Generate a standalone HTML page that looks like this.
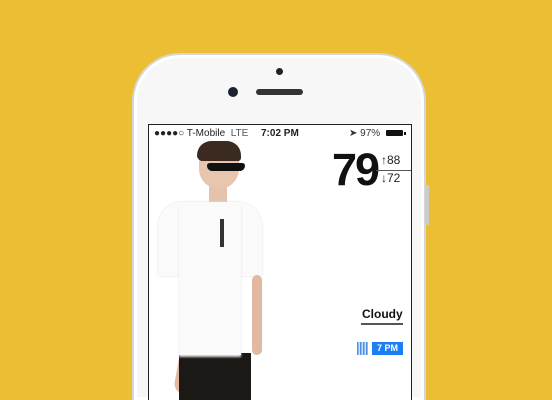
<!DOCTYPE html>
<html style="width:552px;height:400px;overflow:hidden"><head><style>
body{margin:0;width:552px;height:400px;overflow:hidden;background:#ECBE34;position:relative;font-family:"Liberation Sans",sans-serif}
.phone{position:absolute;left:132px;top:53px;width:294px;height:347px;background:#f7f7f7;border-radius:48px 48px 0 0;border:2px solid #d6d6d8;border-bottom:none;box-sizing:border-box;box-shadow:inset 0 0 0 3px #fff}
.screen{position:absolute;left:148px;top:124px;width:264px;height:276px;background:#fff;border:1px solid #222;border-bottom:none;box-sizing:border-box;overflow:hidden}
.abs{position:absolute}
</style></head><body>
<div class="phone"></div>
<div class="abs" style="left:276px;top:68px;width:7px;height:7px;border-radius:50%;background:#222"></div>
<div class="abs" style="left:228px;top:87px;width:10px;height:10px;border-radius:50%;background:#1b2230"></div>
<div class="abs" style="left:256px;top:89px;width:47px;height:6px;border-radius:3px;background:#333"></div>
<div class="abs" style="left:425px;top:185px;width:4px;height:40px;background:#ccc;border-radius:2px"></div>
<div class="screen">
 <div class="abs" style="left:5px;top:3px;font-size:10px;color:#222;white-space:nowrap">●●●●○ T-Mobile &nbsp;<span style="color:#555">LTE</span></div>
 <div class="abs" style="left:112px;top:3px;font-size:10px;font-weight:bold;color:#222">7:02 PM</div>
 <div class="abs" style="left:200px;top:3px;font-size:10px;color:#333">➤ 97%</div>
 <div class="abs" style="left:237px;top:5px;width:17px;height:6px;background:#111;border-radius:1px"></div>
 <div class="abs" style="left:255px;top:7px;width:2px;height:3px;background:#111"></div>
 <div class="abs" style="left:183px;top:20px;font-size:45px;font-weight:bold;letter-spacing:-2px;color:#111;line-height:50px">79</div>
 <div class="abs" style="left:232px;top:28px;font-size:12px;color:#222">↑88</div>
 <div class="abs" style="left:232px;top:46px;font-size:12px;color:#222">↓72</div>
 <div class="abs" style="left:227px;top:45px;width:37px;height:1px;background:#555"></div>
 <div class="abs" style="left:213px;top:182px;font-size:12px;font-weight:bold;color:#111">Cloudy</div>
 <div class="abs" style="left:212px;top:198px;width:42px;height:1.5px;background:#555"></div>
 <div class="abs" style="left:208px;top:217px;width:11px;height:13px;background:repeating-linear-gradient(90deg,#4a8fe8 0 1.5px,#cfe2fb 1.5px 3px)"></div>
 <div class="abs" style="left:223px;top:217px;width:31px;height:13px;background:#1d7ef2;color:#fff;font-size:9px;font-weight:bold;text-align:center;line-height:13px">7 PM</div>
 <div class="abs" style="left:29px;top:210px;width:28px;height:60px;background:#e0b9a0;border-radius:10px;transform:rotate(10deg)"></div>
 <div class="abs" style="left:60px;top:40px;width:18px;height:40px;background:#e5c2aa"></div>
 <div class="abs" style="left:50px;top:18px;width:40px;height:46px;background:#e8c6ae;border-radius:18px 18px 20px 20px"></div>
 <div class="abs" style="left:48px;top:16px;width:44px;height:20px;background:#3b2a20;border-radius:20px 20px 4px 8px"></div>
 <div class="abs" style="left:58px;top:38px;width:38px;height:8px;background:#111;border-radius:3px 3px 6px 6px"></div>
 <div class="abs" style="left:30px;top:228px;width:72px;height:48px;background:#1c1816"></div>
 <div class="abs" style="left:9px;top:77px;width:104px;height:74px;background:#fafafa;border-radius:24px 24px 0 0;box-shadow:0 0 2px #ddd"></div>
 <div class="abs" style="left:30px;top:80px;width:62px;height:150px;background:#fafafa;box-shadow:0 2px 2px #e0e0e0"></div>
 <div class="abs" style="left:71px;top:94px;width:4px;height:28px;background:#333"></div>
 <div class="abs" style="left:103px;top:150px;width:10px;height:80px;background:#e0b9a0;border-radius:5px"></div>
</div>
</body></html>
